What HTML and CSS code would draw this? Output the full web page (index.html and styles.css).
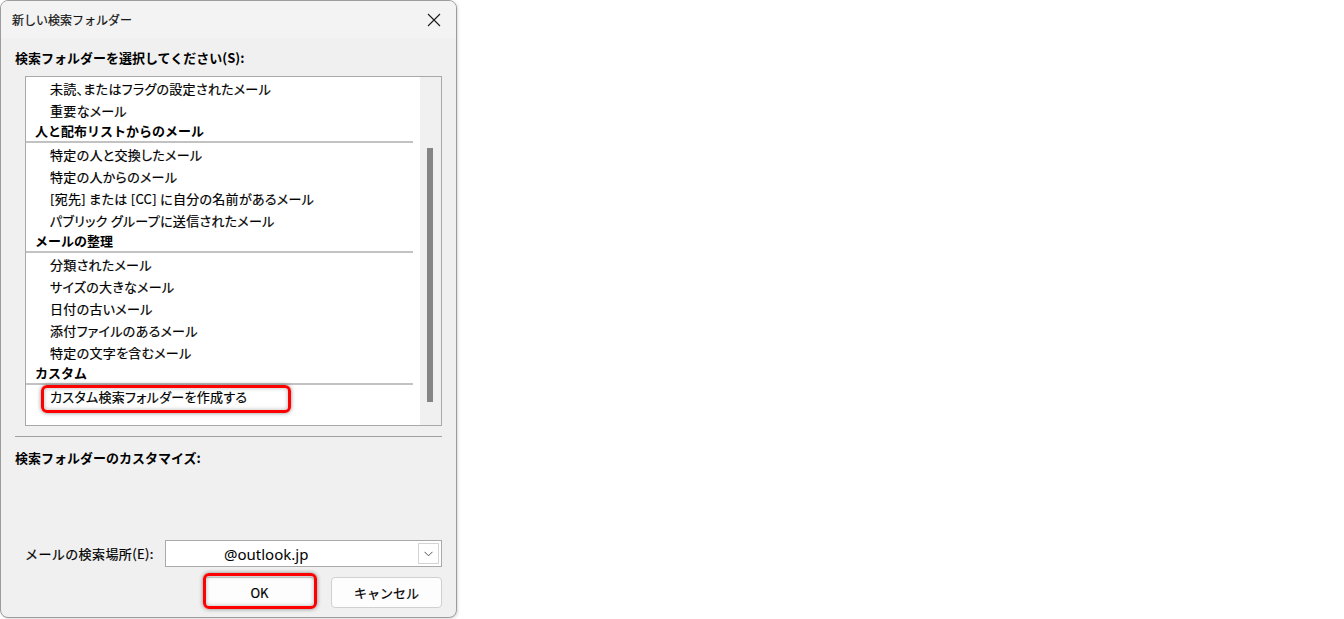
FILE: index.html
```html
<!DOCTYPE html>
<html lang="ja">
<head>
<meta charset="utf-8">
<title>新しい検索フォルダー</title>
<link rel="stylesheet" href="styles.css">
</head>
<body>
<div class="dialog">
  <div class="titlebar">
    <span class="title">新しい検索フォルダー</span>
    <svg class="close" width="14" height="14" viewBox="0 0 14 14"><path d="M1 1 L13 13 M13 1 L1 13" stroke="#1a1a1a" stroke-width="1.1" fill="none"/></svg>
  </div>
  <div class="content">
    <div class="label">検索フォルダーを選択してください(S):</div>
    <div class="listbox">
      <div class="list">
        <div class="item">未読、またはフラグの設定されたメール</div>
        <div class="item">重要なメール</div>
        <div class="group">人と配布リストからのメール</div>
        <div class="item">特定の人と交換したメール</div>
        <div class="item">特定の人からのメール</div>
        <div class="item">[宛先] または [CC] に自分の名前があるメール</div>
        <div class="item">パブリック グループに送信されたメール</div>
        <div class="group">メールの整理</div>
        <div class="item">分類されたメール</div>
        <div class="item">サイズの大きなメール</div>
        <div class="item">日付の古いメール</div>
        <div class="item">添付ファイルのあるメール</div>
        <div class="item">特定の文字を含むメール</div>
        <div class="group">カスタム</div>
        <div class="item marked">カスタム検索フォルダーを作成する<span class="redbox item-box"></span></div>
      </div>
      <div class="scrollbar"><div class="thumb"></div></div>
    </div>
    <div class="separator"></div>
    <div class="label label2">検索フォルダーのカスタマイズ:</div>
    <div class="spacer"></div>
    <div class="combo-row">
      <span class="combo-label">メールの検索場所(E):</span>
      <div class="combo">
        <span class="combo-value">@outlook.jp</span>
        <span class="combo-btn"><svg width="9" height="6" viewBox="0 0 9 6"><path d="M0.5 0.8 L4.5 4.8 L8.5 0.8" stroke="#555" stroke-width="1" fill="none"/></svg></span>
      </div>
    </div>
    <div class="buttons">
      <div class="btn-wrap">
        <button class="btn">OK</button>
        <span class="redbox ok-box"></span>
      </div>
      <button class="btn">キャンセル</button>
    </div>
  </div>
</div>
</body>
</html>
```

FILE: styles.css
```css
html, body {
  margin: 0;
  padding: 0;
  background: #ffffff;
}

body {
  width: 1344px;
  height: 619px;
  overflow: hidden;
  font-family: "Noto Sans CJK JP", sans-serif;
  font-size: 13px;
  color: #000;
  -webkit-text-stroke: 0.2px #000;
}

.dialog {
  width: 455px;
  height: 616px;
  border: 1px solid #9c9c9c;
  border-radius: 8px;
  background: #f0f0f0;
  display: flex;
  flex-direction: column;
  overflow: hidden;
  box-shadow: 1px 1px 3px rgba(0, 0, 0, 0.15);
}

.titlebar {
  height: 37px;
  flex: none;
  background: #f3f3f3;
  display: flex;
  align-items: center;
  justify-content: space-between;
  padding: 0 14px 0 11px;
}

.title {
  font-size: 12px;
  color: #1a1a1a;
  line-height: 20px;
}

.close {
  display: block;
  margin-right: 1px;
}

.content {
  flex: 1;
  display: flex;
  flex-direction: column;
  padding: 0 14px 9px 14px;
}

.label {
  font-weight: bold;
  line-height: 20px;
  margin-top: 10px;
  -webkit-text-stroke: 0;
}

.label2 {
  margin-top: 11px;
}

.listbox {
  margin: 8px 0 0 10px;
  height: 348px;
  border: 1px solid #a9a9a9;
  background: #ffffff;
  display: flex;
}

.list {
  flex: 1;
  padding-top: 1px;
  padding-right: 7px;
}

.item {
  position: relative;
  height: 22px;
  line-height: 22px;
  padding-left: 24px;
  white-space: nowrap;
  font-feature-settings: "palt";
  letter-spacing: 0.3px;
}

.group {
  height: 20px;
  line-height: 20px;
  padding-left: 9px;
  font-weight: bold;
  border-bottom: 2px solid #c2c2c2;
  white-space: nowrap;
  margin-top: -1px;
  margin-bottom: 1px;
  -webkit-text-stroke: 0;
}

.scrollbar {
  width: 21px;
  background: #f0f0f0;
  position: relative;
  flex: none;
}

.thumb {
  position: absolute;
  left: 7px;
  top: 71px;
  width: 6px;
  height: 254px;
  background: #858585;
}

.separator {
  margin-top: 10px;
  height: 1px;
  background: #a0a0a0;
}

.spacer {
  flex: 1;
}

.combo-row {
  display: flex;
  align-items: center;
  padding-left: 10px;
}

.combo-label {
  flex: 1;
  line-height: 20px;
  letter-spacing: 0.4px;
}

.combo {
  width: 275px;
  height: 25px;
  border: 1px solid #a9a9a9;
  background: #ffffff;
  display: flex;
  align-items: center;
  justify-content: space-between;
}

.combo-value {
  font-family: "Noto Sans", "Noto Sans CJK JP", sans-serif;
  font-size: 15px;
  padding-left: 58px;
  line-height: 22px;
  -webkit-text-stroke: 0;
}

.combo-btn {
  width: 19px;
  height: 19px;
  margin-right: 2px;
  border: 1px solid #d4d4d4;
  background: #ffffff;
  display: flex;
  align-items: center;
  justify-content: center;
}

.buttons {
  display: flex;
  justify-content: flex-end;
  gap: 16px;
  margin-top: 10px;
}

.btn-wrap {
  position: relative;
  display: flex;
}

.btn {
  width: 111px;
  height: 31px;
  border: 1px solid #d0d0d0;
  border-radius: 4px;
  background: #fdfdfd;
  font-family: "Noto Sans CJK JP", sans-serif;
  font-size: 13px;
  color: #000;
  padding: 0;
  -webkit-text-stroke: 0.2px #000;
}

.redbox {
  position: absolute;
  border: 3px solid #ff0000;
  border-radius: 6px;
  box-shadow: 0 0 4px rgba(0, 0, 0, 0.45), inset 0 0 4px rgba(0, 0, 0, 0.3);
  box-sizing: border-box;
  -webkit-text-stroke: 0;
}

.item-box {
  left: 15px;
  top: -1px;
  width: 250px;
  height: 28px;
}

.ok-box {
  left: -1px;
  top: -4px;
  width: 114px;
  height: 36px;
}
```
